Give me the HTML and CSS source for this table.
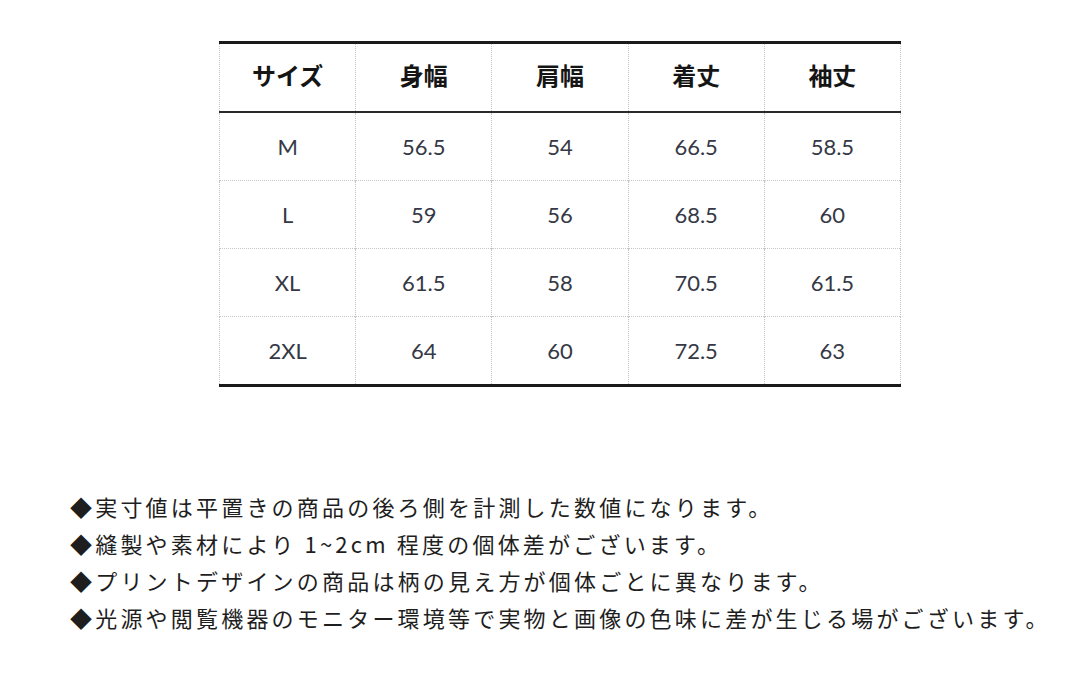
FILE: index.html
```html
<!DOCTYPE html>
<html lang="ja">
<head>
<meta charset="utf-8">
<link rel="stylesheet" href="styles.css">
</head>
<body>
<div class="page">
  <table class="size-table">
    <thead>
      <tr><th>サイズ</th><th>身幅</th><th>肩幅</th><th>着丈</th><th>袖丈</th></tr>
    </thead>
    <tbody>
      <tr><td>M</td><td>56.5</td><td>54</td><td>66.5</td><td>58.5</td></tr>
      <tr><td>L</td><td>59</td><td>56</td><td>68.5</td><td>60</td></tr>
      <tr><td>XL</td><td>61.5</td><td>58</td><td>70.5</td><td>61.5</td></tr>
      <tr><td>2XL</td><td>64</td><td>60</td><td>72.5</td><td>63</td></tr>
    </tbody>
  </table>
  <div class="notes">
    <p>◆実寸値は平置きの商品の後ろ側を計測した数値になります。</p>
    <p>◆縫製や素材により 1~2cm 程度の個体差がございます。</p>
    <p>◆プリントデザインの商品は柄の見え方が個体ごとに異なります。</p>
    <p>◆光源や閲覧機器のモニター環境等で実物と画像の色味に差が生じる場がございます。</p>
  </div>
</div>
</body>
</html>
```

FILE: styles.css
```css
html, body {
  margin: 0;
  padding: 0;
  background: #ffffff;
}
.page {
  width: 1080px;
  height: 683px;
  padding-top: 41px;
  box-sizing: border-box;
}
.size-table {
  margin-left: 219px;
  border-collapse: collapse;
  width: 682px;
  table-layout: fixed;
  border-top: 3px solid #1a1a1a;
  border-bottom: 3px solid #1a1a1a;
}
.size-table th,
.size-table td {
  text-align: center;
  vertical-align: middle;
  border-left: 1px dotted #c4c4c4;
  border-right: 1px dotted #c4c4c4;
  padding: 0;
}
.size-table th {
  height: 69px;
  box-sizing: border-box;
  padding-bottom: 6px;
  font-family: "Noto Sans CJK JP", sans-serif;
  font-weight: 700;
  font-size: 24px;
  color: #151515;
  border-bottom: 2px solid #2a2a2a;
}
.size-table td {
  height: 67px;
  font-family: Lato, "Open Sans", sans-serif;
  font-size: 22px;
  color: #353845;
  border-top: 1px dotted #c8c8c8;
}
.size-table tbody tr:first-child td {
  border-top: none;
}
.notes {
  margin-top: 101px;
  margin-left: 70px;
}
.notes p {
  margin: 0;
  height: 37px;
  line-height: 37px;
  font-family: "Noto Sans CJK JP", sans-serif;
  font-size: 22px;
  letter-spacing: 3.2px;
  color: #1e1e1e;
}
```
